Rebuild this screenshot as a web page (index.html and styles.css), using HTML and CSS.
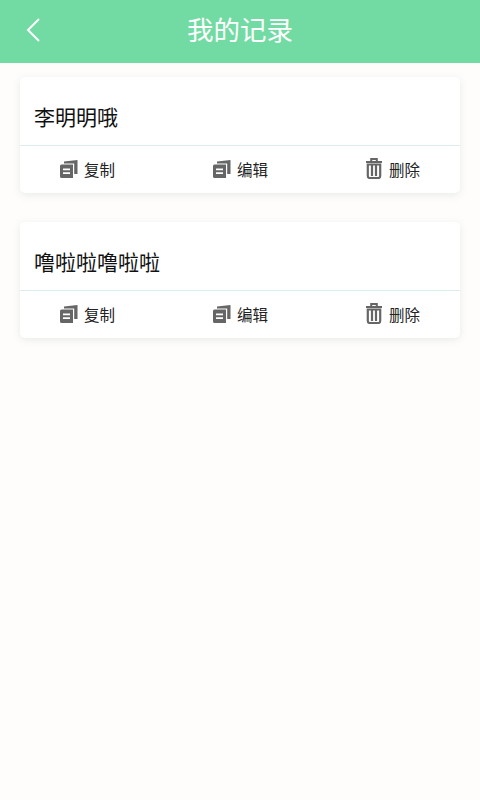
FILE: index.html
```html
<!DOCTYPE html>
<html lang="zh">
<head>
    <meta charset="UTF-8">
    <meta name="viewport" content="width=device-width, initial-scale=1.0">
    <title>我的记录</title>
    <link rel="stylesheet" href="styles.css">
</head>
<body>
    <div class="header">
        <svg class="back" width="16" height="26" viewBox="0 0 16 26">
            <path d="M14 2 L3 13 L14 24" fill="none" stroke="#fff" stroke-width="2"/>
        </svg>
        <div class="title">我的记录</div>
    </div>
    <div class="list">
        <div class="card">
            <div class="card-text">李明明哦</div>
            <div class="actions">
                <div class="action">
                    <svg class="icon" width="18" height="18" viewBox="0 0 18 18">
                        <path d="M0 6 Q0 4.5 1.5 4.5 H13 V18 H1.5 Q0 18 0 16.5 Z M3 8.5 V10.3 H10 V8.5 Z M3 12.3 V14.1 H10 V12.3 Z" fill="#666" fill-rule="evenodd"/>
                        <path d="M4 3.4 V1.5 L17.5 0 V14 H14.2 V3.4 Z" fill="#666"/>
                    </svg>
                    <span>复制</span>
                </div>
                <div class="action">
                    <svg class="icon" width="18" height="18" viewBox="0 0 18 18">
                        <path d="M0 6 Q0 4.5 1.5 4.5 H13 V18 H1.5 Q0 18 0 16.5 Z M3 8.5 V10.3 H10 V8.5 Z M3 12.3 V14.1 H10 V12.3 Z" fill="#666" fill-rule="evenodd"/>
                        <path d="M4 3.4 V1.5 L17.5 0 V14 H14.2 V3.4 Z" fill="#666"/>
                    </svg>
                    <span>编辑</span>
                </div>
                <div class="action">
                    <svg class="icon" width="18" height="21" viewBox="0 0 18 21">
                        <path d="M6.2 3 V1 H11.8 V3 M1 4 H17" fill="none" stroke="#666" stroke-width="2"/>
                        <path d="M2.8 6.5 V18 Q2.8 20 4.8 20 H13.2 Q15.2 20 15.2 18 V6.5 Z M7 7 V18 M11 7 V18" fill="none" stroke="#666" stroke-width="2.2"/>
                    </svg>
                    <span>删除</span>
                </div>
            </div>
        </div>
        <div class="card">
            <div class="card-text">噜啦啦噜啦啦</div>
            <div class="actions">
                <div class="action">
                    <svg class="icon" width="18" height="18" viewBox="0 0 18 18">
                        <path d="M0 6 Q0 4.5 1.5 4.5 H13 V18 H1.5 Q0 18 0 16.5 Z M3 8.5 V10.3 H10 V8.5 Z M3 12.3 V14.1 H10 V12.3 Z" fill="#666" fill-rule="evenodd"/>
                        <path d="M4 3.4 V1.5 L17.5 0 V14 H14.2 V3.4 Z" fill="#666"/>
                    </svg>
                    <span>复制</span>
                </div>
                <div class="action">
                    <svg class="icon" width="18" height="18" viewBox="0 0 18 18">
                        <path d="M0 6 Q0 4.5 1.5 4.5 H13 V18 H1.5 Q0 18 0 16.5 Z M3 8.5 V10.3 H10 V8.5 Z M3 12.3 V14.1 H10 V12.3 Z" fill="#666" fill-rule="evenodd"/>
                        <path d="M4 3.4 V1.5 L17.5 0 V14 H14.2 V3.4 Z" fill="#666"/>
                    </svg>
                    <span>编辑</span>
                </div>
                <div class="action">
                    <svg class="icon" width="18" height="21" viewBox="0 0 18 21">
                        <path d="M6.2 3 V1 H11.8 V3 M1 4 H17" fill="none" stroke="#666" stroke-width="2"/>
                        <path d="M2.8 6.5 V18 Q2.8 20 4.8 20 H13.2 Q15.2 20 15.2 18 V6.5 Z M7 7 V18 M11 7 V18" fill="none" stroke="#666" stroke-width="2.2"/>
                    </svg>
                    <span>删除</span>
                </div>
            </div>
        </div>
    </div>
</body>
</html>
```

FILE: styles.css
```css
* {
    box-sizing: border-box;
}
body {
    margin: 0;
    width: 480px;
    height: 800px;
    background: #fffdfc;
    font-family: "Noto Sans CJK SC", "Noto Sans", sans-serif;
    color: #111;
}
.header {
    height: 63px;
    background: #72dba3;
    display: flex;
    align-items: center;
    justify-content: center;
    padding-bottom: 5px;
    position: relative;
}
.back {
    position: absolute;
    left: 25px;
    top: 17px;
}
.title {
    color: #fff;
    font-size: 26.5px;
    line-height: 34px;
}
.list {
    padding: 14px 20px;
    display: flex;
    flex-direction: column;
    gap: 29px;
}
.card {
    height: 116px;
    background: #fff;
    border-radius: 5px;
    box-shadow: 0 2px 8px rgba(120, 160, 140, 0.18);
}
.card-text {
    height: 69px;
    padding: 24px 0 0 14px;
    font-size: 21px;
    line-height: 30px;
    border-bottom: 1px solid #dcecea;
}
.actions {
    display: grid;
    grid-template-columns: 143px 165px 132px;
    height: 47px;
}
.action {
    display: flex;
    align-items: center;
    justify-content: flex-start;
    gap: 6px;
    padding-bottom: 2px;
    font-size: 15.5px;
    color: #222;
}
.action:nth-child(1) { padding-left: 40px; }
.action:nth-child(2) { padding-left: 50px; }
.action:nth-child(3) { padding-left: 37px; }
```
